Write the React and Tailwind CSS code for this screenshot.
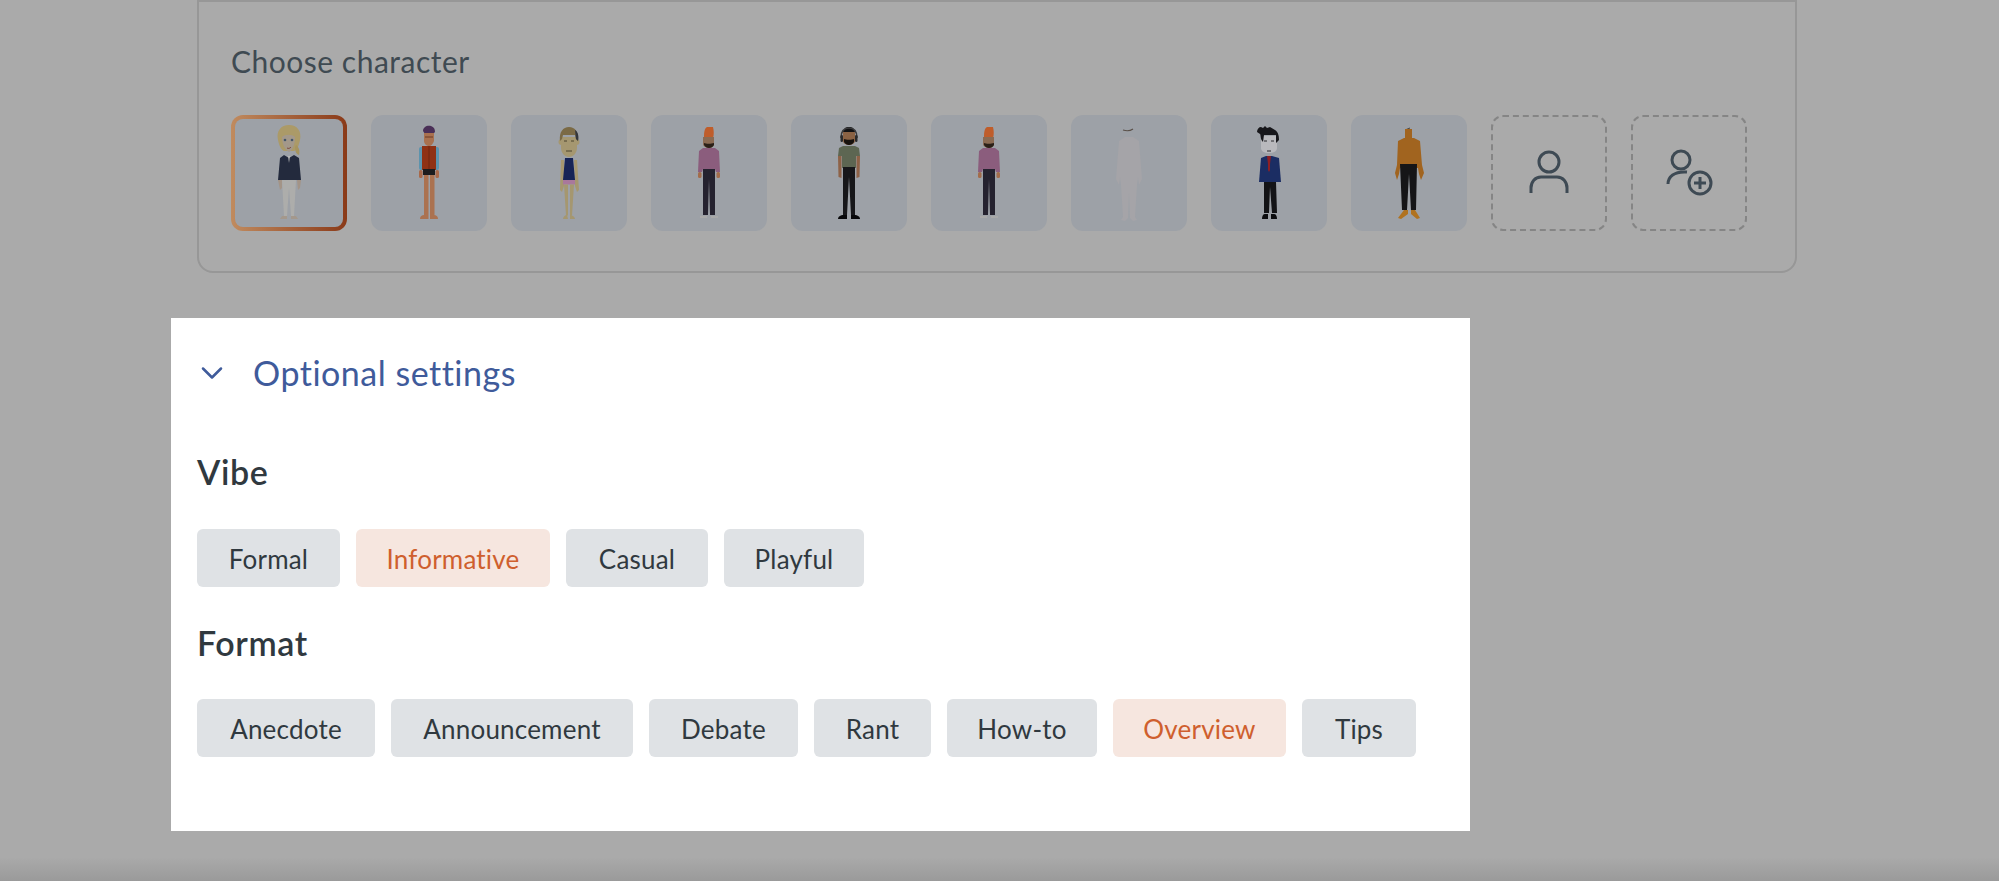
import { ChevronDown } from 'lucide-react';

const font = { fontFamily: '"Lato", "Liberation Sans", sans-serif' };

function Woman() {
  return (
    <>
      <path d="M47 25c-2-9 3-15 11-15s13 6 11 15c-1 5-3 10-6 11H53c-3-1-5-6-6-11z" fill="#ab9a68" />
      <path d="M51 22c3-3 10-3 13 0 0 7-2 13-6 15-4-2-7-8-7-15z" fill="#a3988a" />
      <path d="M65 30c3 2 4 6 3 10-3-1-4-4-4-8z" fill="#a6945f" />
      <circle cx="54" cy="25" r="1.3" fill="#44566a" />
      <circle cx="61" cy="25" r="1.3" fill="#44566a" />
      <path d="M56 33c1.500 .8 3 .4 4-1" stroke="#7a4a40" strokeWidth="1" fill="none" />
      <path d="M53 40l5 3 5-3 5 3 2 22H47l2-22z" fill="#232a3d" />
      <path d="M57 41h2l-1 7z" fill="#b8b8b8" />
      <path d="M47 65h4v8l-2 2zM66 65h4l-1 8-2 2z" fill="#a39487" />
      <path d="M51 65h14l-2 36h-3l-2-28-2 28h-3z" fill="#adadab" />
      <path d="M51 101h5v3h-7zM60 101h5l2 3h-7z" fill="#a4988c" />
    </>
  );
}

function ManVest() {
  return (
    <>
      <path d="M52 16c0-4 4-6 8-5 3 1 4 3 4 6l-2 2h-8z" fill="#4a2f57" />
      <path d="M53 18h10v8c-1 3-3 5-5 5s-5-2-5-5z" fill="#a9714f" />
      <path d="M54 22h8M54 22h3M59 22h3" stroke="#6e3a25" strokeWidth="1.2" />
      <rect x="48" y="32" width="5" height="23" rx="2" fill="#5c93ad" />
      <rect x="63" y="32" width="5" height="23" rx="2" fill="#5c93ad" />
      <rect x="51" y="31" width="14" height="24" fill="#8f3114" />
      <rect x="57.5" y="31" width="1" height="24" fill="#6f2610" />
      <rect x="52" y="54" width="12" height="6" fill="#1c1c1e" />
      <rect x="48" y="55" width="3.5" height="8" rx="1.5" fill="#a8694a" />
      <rect x="64.5" y="55" width="3.5" height="8" rx="1.5" fill="#a8694a" />
      <rect x="53" y="60" width="4.5" height="40" fill="#ab7250" />
      <rect x="59" y="60" width="4.5" height="40" fill="#ab7250" />
      <path d="M49 104c0-3 2-4 4-4h4.500v4zM59 100h4c2 0 4 1 4 4h-8z" fill="#ab7250" />
    </>
  );
}

function ManTank() {
  return (
    <>
      <rect x="47.5" y="24" width="21" height="6" rx="3" fill="#a59770" />
      <path d="M50 22h16v11c0 5-4 9-8 9s-8-4-8-9z" fill="#a59770" />
      <path d="M49 26c-1-9 3-14 9-14s10 5 9 14l-2-2-1-4H52l-1 4z" fill="#7b6a45" />
      <path d="M64 15c3 2 4 6 3 11l-2-2z" fill="#33363c" />
      <path d="M53 26h3M60 26h3M55 36h6" stroke="#4c442f" strokeWidth="1" />
      <path d="M50 45h3v26l-2 6-2-2zM63 45h3l2 30-2 2-2-6z" fill="#a59770" />
      <path d="M54 43h8l2 22H52z" fill="#172456" />
      <rect x="52" y="65" width="12" height="4.5" fill="#a9789c" />
      <path d="M53 69.500h4v31h-2zM59 69.500h4l-2 31h-2z" fill="#a59770" />
      <path d="M52 104c0-2 2-4 4-4l1 4zM59 100c2 0 5 2 5 4h-5z" fill="#a59770" />
    </>
  );
}

function ManSweater() {
  return (
    <>
      <path d="M53 23c0-5 0-9 3-11h6c1 4 1 8 0 11z" fill="#bf5d2b" />
      <path d="M52 22h11v7c0 2-2 4-5 4s-6-2-6-4z" fill="#8a6a52" />
      <path d="M53 28c2 1 7 1 10 0v2c-1 2-3 3-5 3s-4-1-5-3z" fill="#2a2018" />
      <path d="M52 33h12l4 3 1 21h-4l-1-3H52l-1 3h-4l1-21z" fill="#8b5d7d" />
      <rect x="47" y="57" width="3.5" height="6" rx="1.5" fill="#a36c4b" />
      <rect x="65.5" y="57" width="3.5" height="6" rx="1.5" fill="#a36c4b" />
      <path d="M52 54h12v46h-5l-1-36-1 36h-5z" fill="#25222f" />
      <rect x="49" y="101" width="7" height="2" fill="#a9a9a9" />
      <rect x="60" y="101" width="7" height="2" fill="#a9a9a9" />
    </>
  );
}

function ManHeadphones() {
  return (
    <>
      <path d="M52 18c0-5 3-6 6-6s6 1 6 6z" fill="#111113" />
      <path d="M50 23c0-7 3-10 8-10s8 3 8 10" stroke="#3a3a3c" strokeWidth="1.5" fill="none" />
      <rect x="49.5" y="20" width="2.5" height="7" rx="1.2" fill="#2a2a2c" />
      <rect x="64" y="20" width="2.5" height="7" rx="1.2" fill="#2a2a2c" />
      <path d="M52 17h12v9c0 2-3 4-6 4s-6-2-6-4z" fill="#8a6244" />
      <path d="M53 24c2 1 8 1 10 0v3c-1 2-3 3-5 3s-4-1-5-3z" fill="#17120e" />
      <path d="M52 31h12l4 2 1 8h-4v12H51V41h-4l1-8z" fill="#5d6652" />
      <path d="M47 41h3.500v22l-3-1zM65.500 41H69l-.5 21-3 1z" fill="#8e6247" />
      <path d="M52 52h12v48h-4l-2-38-2 38h-4z" fill="#17171a" />
      <path d="M47 104c0-2 2-4 6-4h3v4zM60 100h3c4 0 6 2 6 4h-9z" fill="#08080a" />
    </>
  );
}

function GhostFigure() {
  return (
    <>
      <path d="M52 15c3 1 7 1 10-1" stroke="#5a5048" strokeWidth="1.2" fill="none" />
      <path d="M54 22h8l6 4 3 38-3 6-1-8-1 8-2 32 2 3-4 1-3-3-1-26-1 26-3 3-4-1 2-3-2-32-1-8-1 8-3-6 3-38z" fill="#a5a4a8" />
    </>
  );
}

function ManSuit() {
  return (
    <>
      <path d="M50 21h16v12c0 3-3 5-8 5s-8-2-8-5z" fill="#b9b9bd" />
      <path d="M46 17c0-3 2-5 4-5l2 1 2-2 2 2 3-1 5 3c3 2 4 5 4 10l-3 3v-8H53l-1 7c-3-3-2-7-3-8z" fill="#17171b" />
      <path d="M53 26h3M60 26h3M56 36h4" stroke="#2a2a2e" strokeWidth="1" />
      <path d="M55 41h6l7 2 2 24H48l2-24z" fill="#1b2d63" />
      <path d="M56 41h4l-1 8v6l-1 2-1-2v-6z" fill="#8e1f24" />
      <path d="M53 67h12l1 31h-5l-2-26-1 26h-5z" fill="#131316" />
      <path d="M51 104c0-3 1-5 3-5h3v5zM60 99h3c2 0 3 2 3 5h-6z" fill="#0c0c0f" />
    </>
  );
}

function ManOrange() {
  return (
    <>
      <path d="M54 15l5-2" stroke="#444" strokeWidth="1" />
      <rect x="54" y="14" width="7" height="9" fill="#a1641f" />
      <path d="M53 23h10l6 3 2 24 2 8-3 7-2-6-1-6H49l-1 6-2 6-2-7 2-8 1-24z" fill="#a1641f" />
      <path d="M49 49h17l-1 46h-5l-2-36-2 36h-5z" fill="#151517" />
      <path d="M53 95h4v4l-7 5-3-1zM60 95h4l5 8-3 1-6-5z" fill="#b0721f" />
    </>
  );
}

const characters = [Woman, ManVest, ManTank, ManSweater, ManHeadphones, ManSweater, GhostFigure, ManSuit, ManOrange];

const vibes = [
  { label: 'Formal', width: 'w-[143px]' },
  { label: 'Informative', width: 'w-[194px]', active: true },
  { label: 'Casual', width: 'w-[142px]' },
  { label: 'Playful', width: 'w-[140px]' },
];

const formats = [
  { label: 'Anecdote', width: 'w-[178px]' },
  { label: 'Announcement', width: 'w-[242px]' },
  { label: 'Debate', width: 'w-[149px]' },
  { label: 'Rant', width: 'w-[117px]' },
  { label: 'How-to', width: 'w-[150px]' },
  { label: 'Overview', width: 'w-[173px]', active: true },
  { label: 'Tips', width: 'w-[114px]' },
];

function CharacterCard({ Figure, selected }) {
  if (selected) {
    return (
      <div className="h-[116px] w-[116px] rounded-xl bg-gradient-to-r from-[#c08b5f] to-[#8a3a18] p-1">
        <div className="h-full w-full overflow-hidden rounded-lg bg-[#9da1a7]">
          <svg viewBox="4 4 108 108" className="block h-full w-full">
            <Figure />
          </svg>
        </div>
      </div>
    );
  }

  return (
    <div className="h-[116px] w-[116px] rounded-xl bg-[#9da1a7]">
      <svg viewBox="0 0 116 116" className="block h-full w-full">
        <Figure />
      </svg>
    </div>
  );
}

function DashedCard({ children }) {
  return (
    <div className="flex h-[116px] w-[116px] items-center justify-center rounded-xl border-2 border-dashed border-[#858585]">
      <svg viewBox="2 2 112 112" className="h-[112px] w-[112px]" fill="none" stroke="#3e4a54" strokeWidth="3">
        {children}
      </svg>
    </div>
  );
}

function Pill({ label, width, active }) {
  return (
    <button
      type="button"
      className={`h-[58px] ${width} rounded-md pt-[2px] text-[26px] tracking-[0.2px] ${active ? 'bg-[#f6e6df] text-[#cf5f2e]' : 'bg-[#dfe2e5] text-[#30393f]'}`}
    >
      {label}
    </button>
  );
}

export default function App() {
  return (
    <div className="h-[881px] w-full overflow-hidden bg-[#aaaaaa]" style={font}>
      <div className="pl-[171px]">
        <div className="ml-[26px] h-[273px] w-[1600px] rounded-b-2xl border-2 border-[#979797] px-8">
          <p className="pt-[41px] text-[30px] leading-9 tracking-[0.5px] text-[#3f4a52]">Choose character</p>
          <div className="mt-9 flex gap-6">
            {characters.map((Figure, i) => (
              <CharacterCard key={i} Figure={Figure} selected={i === 0} />
            ))}
            <DashedCard>
              <circle cx="58" cy="47" r="10" />
              <path d="M40 78v-5c0-6 4-11 10-11h16c6 0 10 5 10 11v5" />
            </DashedCard>
            <DashedCard>
              <circle cx="50" cy="45" r="9" />
              <path d="M37 69c0-7 6-13 19-12" />
              <circle cx="69" cy="68" r="11" />
              <path d="M63 68h12M69 62v12" />
            </DashedCard>
          </div>
        </div>

        <div className="mt-[45px] h-[513px] w-[1299px] bg-white pl-[26px] pt-[37px]">
          <div className="flex h-9 items-center gap-[23px]">
            <ChevronDown className="ml-[-3px] h-9 w-9 text-[#3f5b9b]" strokeWidth={1.7} />
            <h2 className="text-[34px] leading-9 tracking-[0.5px] text-[#3f5b9b]">Optional settings</h2>
          </div>

          <h3 className="mt-[61px] text-[34px] font-semibold leading-10 tracking-[0.6px] text-[#30393f]">Vibe</h3>
          <div className="mt-[37px] flex gap-4">
            {vibes.map((item) => (
              <Pill key={item.label} {...item} />
            ))}
          </div>

          <h3 className="mt-9 text-[34px] font-semibold leading-10 tracking-[0.6px] text-[#30393f]">Format</h3>
          <div className="mt-9 flex gap-4">
            {formats.map((item) => (
              <Pill key={item.label} {...item} />
            ))}
          </div>
        </div>
      </div>
      <div className="mt-[26px] h-6 bg-gradient-to-b from-[#aaaaaa] to-[#9a9a9a]" />
    </div>
  );
}
